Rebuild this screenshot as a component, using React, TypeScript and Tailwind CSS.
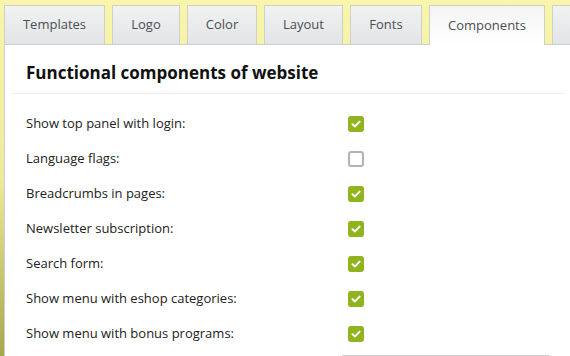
import React from 'react';

const tabs = [
  { label: 'Templates', w: 'w-[101px]' },
  { label: 'Logo', w: 'w-[68px]' },
  { label: 'Color', w: 'w-[70px]' },
  { label: 'Layout', w: 'w-[79px]' },
  { label: 'Fonts', w: 'w-[72px]' },
  { label: 'Components', w: 'w-[116px]' },
  { label: '', w: 'w-[90px]' },
];
const active = 'Components';

const options = [
  { label: 'Show top panel with login:', checked: true },
  { label: 'Language flags:', checked: false },
  { label: 'Breadcrumbs in pages:', checked: true },
  { label: 'Newsletter subscription:', checked: true },
  { label: 'Search form:', checked: true },
  { label: 'Show menu with eshop categories:', checked: true },
  { label: 'Show menu with bonus programs:', checked: true },
];

function Checkbox({ checked }: { checked: boolean }) {
  if (!checked) {
    return <div className="w-4 h-4 rounded-[3px] border-2 border-[#b3b3b3] bg-white" />;
  }
  return (
    <div className="w-4 h-4 rounded-[3px] bg-[#8fb41e] flex items-center justify-center">
      <svg width="10" height="8" viewBox="0 0 10 8">
        <path d="M1.5 4.2 L4 6.4 L8.6 1.6" fill="none" stroke="#fff" strokeWidth="2" strokeLinecap="round" strokeLinejoin="round" />
      </svg>
    </div>
  );
}

export default function App() {
  return (
    <div
      className="w-[570px] h-[356px] overflow-hidden pl-1 pt-[5px] bg-gradient-to-b from-[#f8f6aa] via-[#eeea9c] to-[#a6a84c]"
      style={{ fontFamily: '"Open Sans", "Liberation Sans", sans-serif' }}
    >
      {/* Tabs */}
      <div className="flex gap-[7px] -mb-px relative z-10">
        {tabs.map((t, i) =>
          t.label === active ? (
            <div
              key={i}
              className={`${t.w} h-10 shrink-0 flex items-center justify-center border border-b-0 border-[#cfcfcf] bg-gradient-to-b from-[#f4f4f4] to-white text-[13px] text-[#4a4f57]`}
            >
              {t.label}
            </div>
          ) : (
            <div
              key={i}
              className={`${t.w} h-10 shrink-0 flex items-center justify-center border border-[#cfcfcf] bg-gradient-to-b from-[#f1f2f2] to-[#e2e4e6] text-[13px] text-[#4a4f57]`}
            >
              {t.label}
            </div>
          )
        )}
      </div>

      {/* Panel */}
      <div className="bg-white border-l border-t border-[#cfcfcf] h-full">
        <div className="mx-[6px] px-[15px] pt-[16px] pb-[8px] border-b border-[#eeeeee]">
          <h2 className="text-[17px] font-bold text-[#111] leading-[24px]">Functional components of website</h2>
        </div>
        <div className="px-[21px] pt-[12px]">
          {options.map((o) => (
            <div key={o.label} className="flex items-center h-[35px]">
              <div className="w-[322px] text-[13px] text-[#222]">{o.label}</div>
              <Checkbox checked={o.checked} />
            </div>
          ))}
          <div className="flex items-start h-[35px] pt-[4px]">
            <div className="w-[320px]" />
            <div className="w-[210px] h-7 border border-[#cfcfcf] flex justify-end">
              <div className="w-4 h-full bg-[#333]" />
            </div>
          </div>
        </div>
      </div>
    </div>
  );
}
